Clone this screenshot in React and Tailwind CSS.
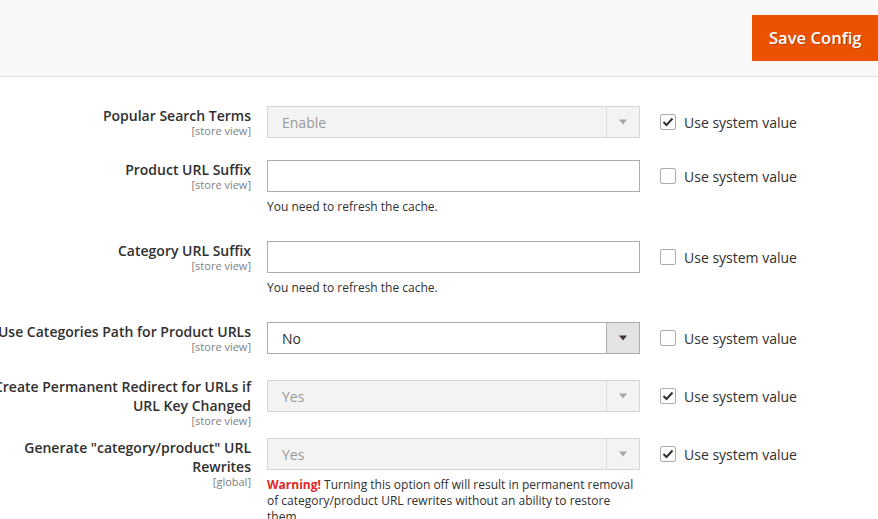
import React from "react";

const font = { fontFamily: '"Open Sans", "Noto Sans", sans-serif' };

function Arrow({ disabled }) {
  return (
    <svg width="10" height="6" viewBox="0 0 10 6">
      <path d="M1 0.5 L9 0.5 L5 5.5 Z" fill={disabled ? "#a6a6a6" : "#41362f"} />
    </svg>
  );
}

function Select({ value, disabled }) {
  if (disabled) {
    return (
      <div className="flex h-[32px] w-[373px] items-stretch border border-[#d6d6d6] bg-[#f3f3f3]">
        <div className="flex flex-1 items-center pl-[14px] text-[14px] text-[#9a9a9a]">{value}</div>
        <div className="flex w-[33px] items-center justify-center border-l border-[#dcdcdc]">
          <Arrow disabled />
        </div>
      </div>
    );
  }
  return (
    <div className="flex h-[32px] w-[373px] items-stretch border border-[#adadad] bg-white">
      <div className="flex flex-1 items-center pl-[14px] text-[14px] text-[#303030]">{value}</div>
      <div className="flex w-[33px] items-center justify-center border-l border-[#adadad] bg-[#e3e3e3]">
        <Arrow />
      </div>
    </div>
  );
}

function Input() {
  return <div className="h-[32px] w-[373px] border border-[#adadad] bg-white" />;
}

function Check({ checked }) {
  return (
    <div className="flex h-[32px] items-center">
      <div className="flex h-[16px] w-[16px] items-center justify-center rounded-[2px] border border-[#adadad] bg-white">
        {checked && (
          <svg width="12" height="10" viewBox="0 0 12 10">
            <path d="M1.5 5 L4.5 8 L10.5 1.5" fill="none" stroke="#303030" strokeWidth="2" />
          </svg>
        )}
      </div>
      <span className="ml-[8px] text-[14px] text-[#303030]">Use system value</span>
    </div>
  );
}

function Row({ label, scope, children, checked, mt, labelMt = "mt-0", scopeMt = "mt-[-1px]" }) {
  return (
    <div className={`flex items-start ${mt}`}>
      <div className="ml-[-30px] w-[281px] shrink-0 text-right">
        <div className={`${labelMt} text-[14px] font-semibold leading-[19px] text-[#303030]`}>{label}</div>
        <div className={`${scopeMt} text-[11px] leading-[13px] text-[#808080]`}>{scope}</div>
      </div>
      <div className="ml-[16px] w-[373px] shrink-0">{children}</div>
      <div className="ml-[20px]">
        <Check checked={checked} />
      </div>
    </div>
  );
}

export default function App() {
  return (
    <div className="h-[519px] w-[878px] overflow-hidden bg-white" style={font}>
      <div className="flex h-[77px] justify-end border-b border-[#e3e3e3] bg-[#f8f8f8] pt-[15px]">
        <div className="flex h-[46px] w-[126px] items-center bg-[#eb5202] pl-[17px] text-[16.6px] font-semibold text-white [text-shadow:1px_1px_0_rgba(0,0,0,0.25)]">
          Save Config
        </div>
      </div>

      <Row label="Popular Search Terms" scope="[store view]" checked mt="mt-[29px]">
        <Select value="Enable" disabled />
      </Row>

      <Row label="Product URL Suffix" scope="[store view]" mt="mt-[22px]">
        <Input />
        <div className="mt-[7px] text-[12px] leading-[16px] text-[#303030]">You need to refresh the cache.</div>
      </Row>

      <Row label="Category URL Suffix" scope="[store view]" mt="mt-[26px]">
        <Input />
        <div className="mt-[7px] text-[12px] leading-[16px] text-[#303030]">You need to refresh the cache.</div>
      </Row>

      <Row label="Use Categories Path for Product URLs" scope="[store view]" mt="mt-[26px]">
        <Select value="No" />
      </Row>

      <Row
        label="Create Permanent Redirect for URLs if URL Key Changed"
        scope="[store view]"
        checked
        mt="mt-[26px]"
        labelMt="mt-[-3px]"
        scopeMt="mt-[-1px]"
      >
        <Select value="Yes" disabled />
      </Row>

      <Row label={'Generate "category/product" URL Rewrites'} scope="[global]" checked mt="mt-[11px]">
        <Select value="Yes" disabled />
        <div className="mt-[7px] text-[12px] leading-[16px] text-[#303030]">
          <span className="font-bold text-[#e22626]">Warning!</span> Turning this option off will result in permanent removal of category/product URL rewrites without an ability to restore them.
        </div>
      </Row>
    </div>
  );
}
